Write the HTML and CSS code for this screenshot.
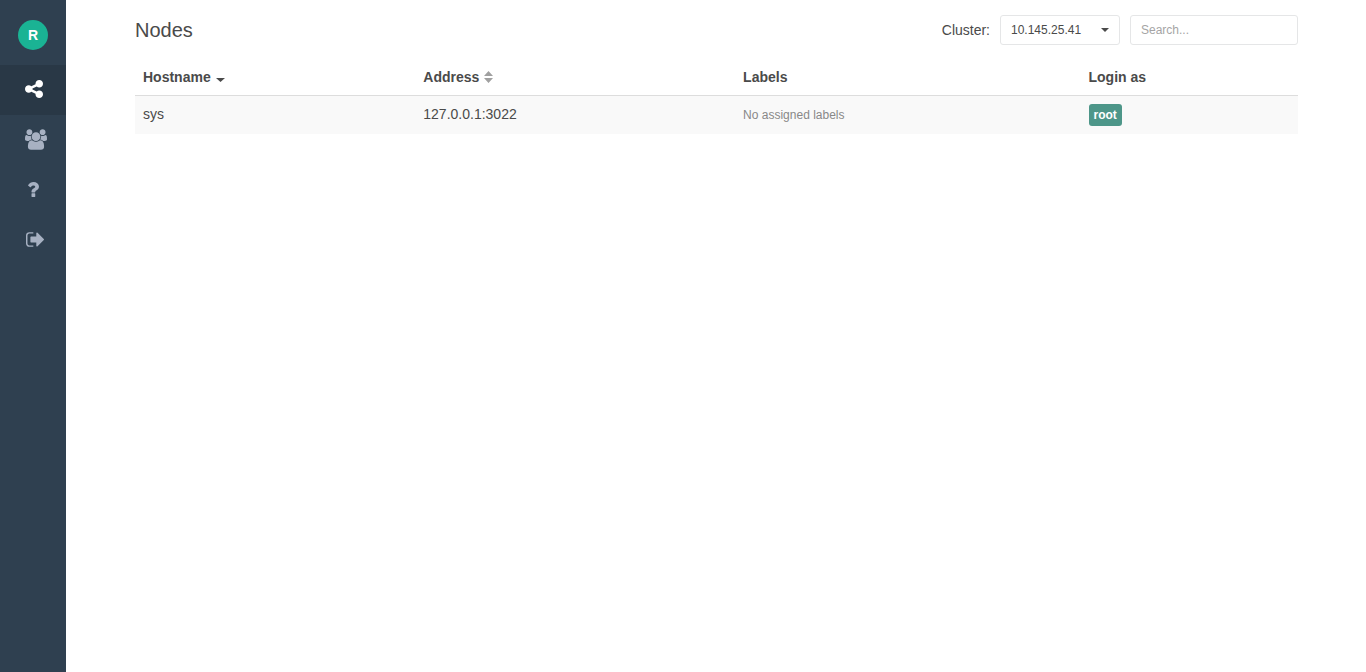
FILE: index.html
```html
<!DOCTYPE html>
<html lang="en">
<head>
<meta charset="utf-8">
<title>Nodes</title>
<link rel="stylesheet" href="styles.css">
</head>
<body>
<nav class="sidebar" aria-label="Main">
  <div class="profile"><span class="avatar">R</span></div>
  <a class="nav-item active" href="#nodes" aria-label="Nodes">
    <svg class="icon-share" viewBox="128 128 1536 1536"><path d="M1344 1024q133 0 226.500 93.500t93.500 226.500-93.500 226.500-226.500 93.500-226.500-93.500-93.500-226.500q0-12 2-34l-360-180q-92 86-218 86-133 0-226.500-93.500t-93.500-226.500 93.500-226.500 226.500-93.500q126 0 218 86l360-180q-2-22-2-34 0-133 93.500-226.500t226.500-93.500 226.500 93.500 93.500 226.500-93.500 226.500-226.500 93.500q-126 0-218-86l-360 180q2 22 2 34t-2 34l360 180q92-86 218-86z"/></svg>
  </a>
  <a class="nav-item" href="#sessions" aria-label="Sessions">
    <svg class="icon-group" viewBox="-64 0 1920 1792"><path d="M529 896q-162 5-265 128h-134q-82 0-138-40.5t-56-118.5q0-353 124-353 6 0 43.5 21t97.5 42.5 119 21.5q67 0 133-23-5 37-5 66 0 139 81 256zm1071 637q0 120-73 189.5t-194 69.5h-874q-121 0-194-69.5t-73-189.5q0-53 3.5-103.5t14-109 26.5-108.5 43-97.5 62-81 85.5-53.5 111.5-20q10 0 43 21.5t73 48 107 48 135 21.5 135-21.5 107-48 73-48 43-21.5q61 0 111.5 20t85.5 53.5 62 81 43 97.5 26.5 108.500 14 109 3.5 103.500zm-1024-1277q0 106-75 181t-181 75-181-75-75-181 75-181 181-75 181 75 75 181zm704 384q0 159-112.500 271.500t-271.500 112.500-271.500-112.500-112.500-271.500 112.500-271.500 271.500-112.500 271.500 112.500 112.500 271.500zm576 225q0 78-56 118.500t-138 40.500h-134q-103-123-265-128 81-117 81-256 0-29-5-66 66 23 133 23 59 0 119-21.500t97.500-42.500 43.500-21q124 0 124 353zm-128-609q0 106-75 181t-181 75-181-75-75-181 75-181 181-75 181 75 75 181z"/></svg>
  </a>
  <a class="nav-item" href="#help" aria-label="Help">
    <svg class="icon-question" viewBox="388 256 1016 1280"><path d="M1088 1256v240q0 16-12 28t-28 12h-240q-16 0-28-12t-12-28v-240q0-16 12-28t28-12h240q16 0 28 12t12 28zm316-600q0 54-15.500 101t-35 76.500-55 59.500-57.500 43.500-61 35.500q-41 23-68.500 65t-27.500 67q0 17-12 32.500t-28 15.500h-240q-15 0-25.500-18.500t-10.500-37.500v-45q0-83 65-156.500t143-108.500q59-27 84-56t25-76q0-42-46.500-74t-107.500-32q-65 0-108 29-35 25-107 115-13 16-31 16-12 0-25-8l-164-125q-13-10-15.500-25t5.500-28q160-266 464-266 80 0 161 31t146 83 106 127.500 41 158.500z"/></svg>
  </a>
  <a class="nav-item" href="#logout" aria-label="Log out">
    <svg class="icon-signout" viewBox="64 256 1568 1280"><path d="M704 1440q0 4 1 20t.5 26.500-3 23.500-10 19.500-20.500 6.500h-320q-119 0-203.500-84.500t-84.500-203.500v-704q0-119 84.500-203.500t203.500-84.500h320q13 0 22.500 9.500t9.500 22.500q0 4 1 20t.5 26.500-3 23.500-10 19.500-20.500 6.500h-320q-66 0-113 47t-47 113v704q0 66 47 113t113 47h312l11.500 1 11.500 3 8 5.500 7 9 2 13.500zm928-544q0 26-19 45l-544 544q-19 19-45 19t-45-19-19-45v-288h-448q-26 0-45-19t-19-45v-384q0-26 19-45t45-19h448v-288q0-26 19-45t45-19 45 19l544 544q19 19 19 45z"/></svg>
  </a>
</nav>
<main class="content">
  <header class="toolbar">
    <h1 class="title">Nodes</h1>
    <label class="cluster-label" for="cluster">Cluster:</label>
    <div class="select-wrap">
      <select class="field" id="cluster"><option>10.145.25.41</option></select>
      <svg class="select-caret" viewBox="0 0 8 4"><path d="M0 0h8L4 4z"/></svg>
    </div>
    <input class="field search" type="text" placeholder="Search..." aria-label="Search">
  </header>
  <table class="nodes">
    <colgroup><col class="col-host"><col class="col-address"><col class="col-labels"><col></colgroup>
    <thead>
      <tr>
        <th><button class="sort" type="button">Hostname <svg class="sort-icon" viewBox="0 0 9 12"><path d="M0 7h9L4.500 11z"/></svg></button></th>
        <th><button class="sort" type="button">Address <svg class="sort-icon muted" viewBox="0 0 9 12"><path d="M0 5h9L4.500 0zM0 7h9L4.500 12z"/></svg></button></th>
        <th>Labels</th>
        <th>Login as</th>
      </tr>
    </thead>
    <tbody>
      <tr>
        <td>sys</td>
        <td>127.0.0.1:3022</td>
        <td class="empty">No assigned labels</td>
        <td><a class="login" href="#root">root</a></td>
      </tr>
    </tbody>
  </table>
</main>
</body>
</html>
```
FILE: styles.css
```css
* {
  box-sizing: border-box;
}

body {
  display: flex;
  min-height: 100vh;
  margin: 0;
  background: #fff;
  color: #4a4a4a;
  font: 14px/20px "Liberation Sans", Arial, sans-serif;
}

.sidebar {
  flex: none;
  width: 66px;
  background: #2f4050;
}

.profile {
  display: flex;
  justify-content: center;
  padding: 20px 0 15px;
}

.avatar {
  width: 30px;
  height: 30px;
  border-radius: 50%;
  background: #1ab394;
  color: #fff;
  font-weight: bold;
  line-height: 30px;
  text-align: center;
}

.nav-item {
  display: flex;
  align-items: center;
  height: 50px;
  padding: 0 0 2px 25px;
  color: #a7b1c2;
}

.nav-item.active {
  background: #293846;
  color: #fff;
}

svg {
  fill: currentColor;
}

.icon-share {
  width: 18px;
  height: 18px;
}

.icon-group {
  width: 22px;
  height: 21px;
}

.icon-question {
  width: 12px;
  height: 15px;
  margin-left: 2px;
}

.icon-signout {
  width: 18px;
  height: 15px;
  margin-left: 1px;
}

.content {
  flex: 1;
  padding: 15px 68px 15px 69px;
}

.toolbar {
  display: flex;
  align-items: center;
  gap: 10px;
  margin-bottom: 14px;
}

.title {
  flex: 1;
  margin: 0;
  font-size: 20px;
  font-weight: normal;
  line-height: 30px;
}

.select-wrap {
  position: relative;
  width: 120px;
}

.field {
  display: block;
  width: 100%;
  height: 30px;
  padding: 0 10px;
  border: 1px solid #e5e6e7;
  border-radius: 3px;
  background: #fff;
  color: #4a4a4a;
  font: 12px/18px "Liberation Sans", Arial, sans-serif;
  appearance: none;
}

.field.search {
  width: 168px;
}

.field::placeholder {
  color: #a5a5a5;
  opacity: 1;
}

.select-caret {
  position: absolute;
  top: 13px;
  right: 11px;
  width: 8px;
  height: 4px;
  pointer-events: none;
}

.nodes {
  width: 100%;
  border-collapse: separate;
  border-spacing: 0;
  table-layout: fixed;
}

.col-host {
  width: 24.1%;
}

.col-address {
  width: 27.5%;
}

.col-labels {
  width: 29.7%;
}

.nodes th,
.nodes td {
  padding: 8px;
  text-align: left;
}

.nodes th {
  border-bottom: 1px solid #ddd;
}

.nodes td {
  height: 38px;
  background: #f9f9f9;
  vertical-align: top;
}

.nodes .empty {
  color: #888;
  font-size: 12px;
  vertical-align: middle;
}

.sort {
  display: flex;
  align-items: center;
  gap: 5px;
  padding: 0;
  border: 0;
  background: none;
  color: inherit;
  font: inherit;
}

.sort-icon {
  width: 9px;
  height: 12px;
}

.sort-icon.muted {
  color: #a0a0a0;
}

.login {
  display: block;
  width: fit-content;
  padding: 2px 5px;
  border-radius: 3px;
  background: #4d9689;
  color: #fff;
  font-size: 12px;
  font-weight: bold;
  line-height: 18px;
  text-decoration: none;
}
```
